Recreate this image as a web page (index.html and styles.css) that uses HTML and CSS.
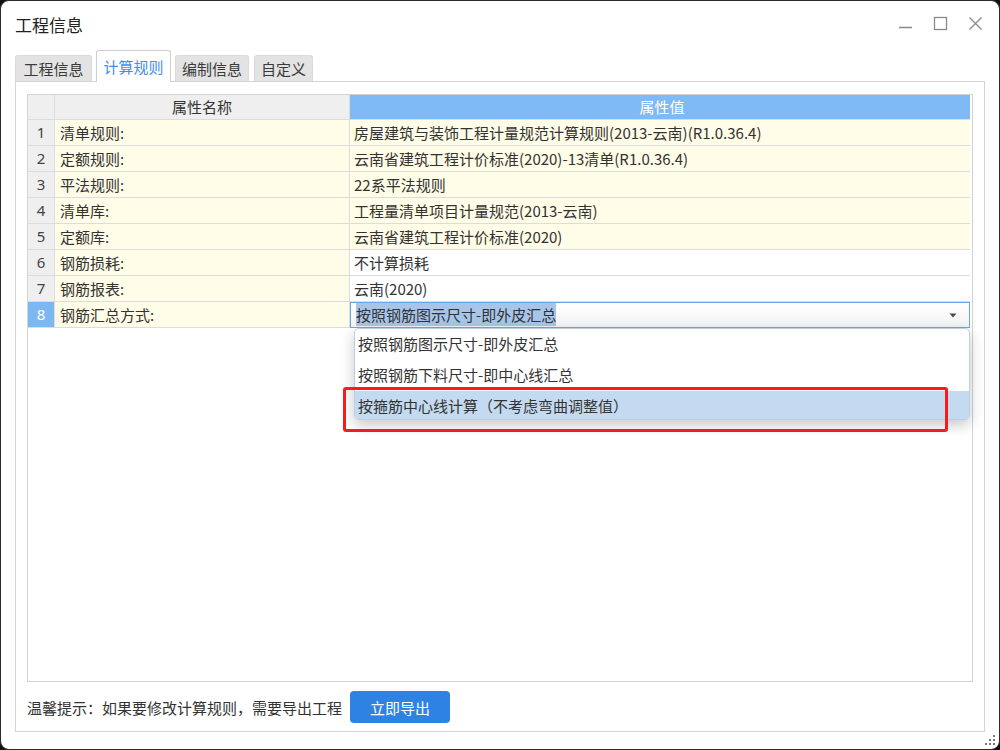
FILE: index.html
```html
<!DOCTYPE html>
<html lang="zh-CN">
<head>
<meta charset="utf-8">
<title>工程信息</title>
<link rel="stylesheet" href="styles.css">
</head>
<body>
<div class="window">
  <div class="titlebar">
    <div class="title">工程信息</div>
    <div class="controls">
      <svg class="ctl" width="20" height="20" viewBox="0 0 20 20"><path d="M3 13.5h13" stroke="#8a8a8a" stroke-width="1.3" fill="none"/></svg>
      <svg class="ctl" width="20" height="20" viewBox="0 0 20 20"><rect x="3.5" y="3.5" width="12" height="12" stroke="#8a8a8a" stroke-width="1.3" fill="none"/></svg>
      <svg class="ctl" width="20" height="20" viewBox="0 0 20 20"><path d="M3.5 3.5l12 12M15.5 3.5l-12 12" stroke="#8a8a8a" stroke-width="1.3" fill="none"/></svg>
    </div>
  </div>
  <div class="tabs">
    <div class="tab t1">工程信息</div>
    <div class="tab active t2">计算规则</div>
    <div class="tab t3">编制信息</div>
    <div class="tab t4">自定义</div>
  </div>
  <div class="panel">
    <div class="grid-box">
      <div class="grid">
        <div class="c num hd"></div>
        <div class="c name hd center">属性名称</div>
        <div class="c val hd blue center">属性值</div>

        <div class="c num">1</div><div class="c name">清单规则:</div><div class="c val">房屋建筑与装饰工程计量规范计算规则(2013-云南)(R1.0.36.4)</div>
        <div class="c num">2</div><div class="c name">定额规则:</div><div class="c val">云南省建筑工程计价标准(2020)-13清单(R1.0.36.4)</div>
        <div class="c num">3</div><div class="c name">平法规则:</div><div class="c val">22系平法规则</div>
        <div class="c num">4</div><div class="c name">清单库:</div><div class="c val">工程量清单项目计量规范(2013-云南)</div>
        <div class="c num">5</div><div class="c name">定额库:</div><div class="c val">云南省建筑工程计价标准(2020)</div>
        <div class="c num">6</div><div class="c name">钢筋损耗:</div><div class="c val white">不计算损耗</div>
        <div class="c num">7</div><div class="c name">钢筋报表:</div><div class="c val white">云南(2020)</div>
        <div class="c num sel">8</div><div class="c name">钢筋汇总方式:</div>
        <div class="c val combo"><span class="seltext">按照钢筋图示尺寸-即外皮汇总</span><svg class="arrow" width="8" height="5" viewBox="0 0 8 5"><path d="M0.5 0.5h7L4 4.5z" fill="#4a4a55"/></svg></div>
      </div>
      <div class="dropdown">
        <div class="opt">按照钢筋图示尺寸-即外皮汇总</div>
        <div class="opt">按照钢筋下料尺寸-即中心线汇总</div>
        <div class="opt hl">按箍筋中心线计算（不考虑弯曲调整值）</div>
      </div>
      <div class="redbox"></div>
    </div>
    <div class="footer">
      <span class="hint">温馨提示：如果要修改计算规则，需要导出工程</span>
      <button class="btn">立即导出</button>
    </div>
  </div>
  <svg class="grip" width="12" height="12" viewBox="0 0 12 12">
    <rect x="9" y="0" width="2" height="2" fill="#7a7a7a"/>
    <rect x="5" y="4" width="2" height="2" fill="#7a7a7a"/>
    <rect x="9" y="4" width="2" height="2" fill="#7a7a7a"/>
    <rect x="1" y="8" width="2" height="2" fill="#7a7a7a"/>
    <rect x="5" y="8" width="2" height="2" fill="#7a7a7a"/>
    <rect x="9" y="8" width="2" height="2" fill="#7a7a7a"/>
  </svg>
</div>
</body>
</html>
```
FILE: styles.css
```css
html, body {
  margin: 0;
  padding: 0;
  background: #111;
}
body {
  font-family: "Noto Sans CJK SC", "Microsoft YaHei", "Noto Sans", sans-serif;
  color: #333;
}
.window {
  position: relative;
  width: 1000px;
  height: 750px;
  box-sizing: border-box;
  border: 1px solid #2a2a2a;
  border-radius: 9px;
  background: #fff;
  overflow: hidden;
}
.titlebar {
  height: 49px;
  display: flex;
  align-items: center;
  justify-content: space-between;
  padding: 0 13px 0 14px;
}
.title {
  font-size: 17px;
  color: #222;
  margin-top: -3px;
}
.controls {
  display: flex;
  gap: 15px;
  margin-top: -4px;
}
.ctl { display: block; }
.tabs {
  height: 31px;
  display: flex;
  align-items: flex-end;
  padding-left: 14px;
  position: relative;
  z-index: 2;
}
.tab {
  box-sizing: border-box;
  height: 26px;
  background: #e3e3e3;
  border: 1px solid #dadada;
  border-bottom: none;
  border-radius: 3px 3px 0 0;
  font-size: 15px;
  line-height: 25px;
  text-align: center;
  color: #3a3a3a;
  margin-right: 4px;
}
.t1 { width: 77px; }
.t2 { width: 75px; }
.t3 { width: 74px; margin-right: 5px; }
.t4 { width: 59px; }
.tab.active {
  height: 32px;
  background: #fff;
  border-color: #cfcfcf;
  color: #3d8ef0;
  line-height: 31px;
  margin-bottom: -1px;
}
.panel {
  margin: 0 14px;
  height: 651px;
  box-sizing: border-box;
  border: 1px solid #d3d3d3;
  padding: 12px 11px 0 11px;
}
.grid-box {
  position: relative;
  height: 588px;
  box-sizing: border-box;
  border: 1px solid #d3d3d3;
  padding-right: 1px;
}
.grid {
  display: grid;
  grid-template-columns: 27px 295px 620px;
  grid-template-rows: 25px repeat(8, 26px);
}
.c {
  box-sizing: border-box;
  border-right: 1px solid #dcdcdc;
  border-bottom: 1px solid #dcdcdc;
  font-size: 15px;
  line-height: 25px;
  white-space: nowrap;
  overflow: hidden;
  background: #fffce7;
  padding-left: 5px;
  color: #333;
}
.c.hd { line-height: 24px; background: #efefef; }
.c.center { text-align: center; padding-left: 0; }
.c.blue { background: #7fbaf7; color: #fff; border-right: none; }
.c.val { border-right: none; padding-left: 4px; }
.c.num {
  background: #efefef;
  text-align: center;
  padding-left: 0;
  color: #444;
  font-family: "Noto Sans", "Noto Sans CJK SC", sans-serif;
  font-size: 15px;
}
.c.num.sel { background: #7db7f2; color: #fff; }
.c.white { background: #fff; }
.c.combo {
  position: relative;
  background: linear-gradient(#ffffff, #f3f3f3);
  border: 1px solid #6aa8ea;
  padding-left: 5px;
  line-height: 23px;
}
.seltext {
  background: #a7c5e8;
  color: #333;
  padding: 1px 0;
}
.arrow {
  position: absolute;
  right: 12px;
  top: 10px;
}
.dropdown {
  position: absolute;
  left: 326px;
  top: 233px;
  width: 616px;
  height: 92px;
  box-sizing: border-box;
  background: #fff;
  border: 1px solid #b9cfe2;
  border-radius: 5px;
  box-shadow: 0 5px 14px rgba(0, 0, 0, 0.22);
  overflow: hidden;
  z-index: 3;
}
.opt {
  height: 31px;
  line-height: 30px;
  font-size: 15px;
  padding-left: 3px;
  color: #333;
  white-space: nowrap;
}
.opt.hl {
  background: #c4daf0;
  height: 30px;
}
.redbox {
  position: absolute;
  left: 315px;
  top: 292px;
  width: 605px;
  height: 45px;
  box-sizing: border-box;
  border: 3px solid #f41c1c;
  border-radius: 3px;
  z-index: 4;
}
.footer {
  height: 49px;
  display: flex;
  align-items: center;
  gap: 8px;
  padding-top: 1px;
  box-sizing: border-box;
}
.hint {
  font-size: 15px;
  color: #333;
}
.btn {
  width: 100px;
  height: 32px;
  border: none;
  border-radius: 4px;
  background: #2e82e2;
  color: #fff;
  font-family: "Noto Sans CJK SC", sans-serif;
  font-size: 15px;
  padding: 0;
}
.grip {
  position: absolute;
  right: 3px;
  bottom: 2px;
}
```
